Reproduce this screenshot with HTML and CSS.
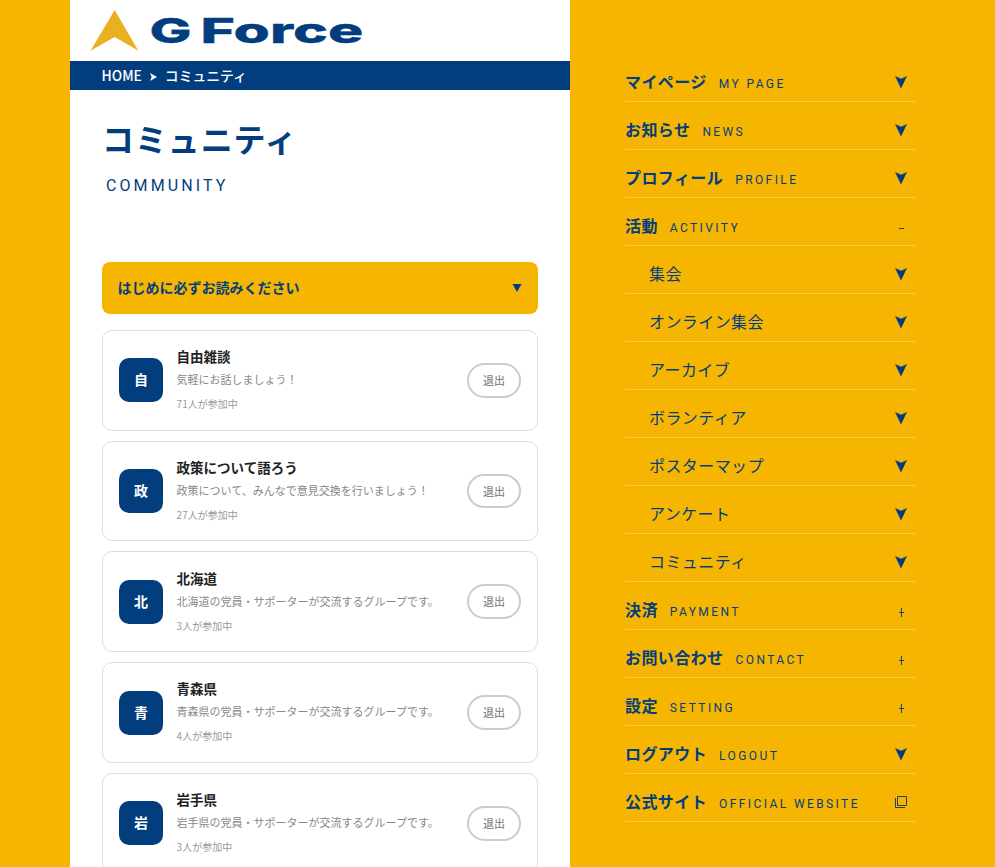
FILE: index.html
```html
<!DOCTYPE html>
<html lang="ja">
<head>
<meta charset="utf-8">
<title>コミュニティ | G Force</title>
<link rel="stylesheet" href="styles.css">
</head>
<body>
<svg class="defs" width="0" height="0">
  <symbol id="arrow" viewBox="0 0 12 13"><path d="M0 0 L6 2.7 L12 0 L6 12.5 Z"/></symbol>
  <symbol id="window" viewBox="0 0 12 12"><path d="M2.5 .5h9v9h-9zM.5 2v9.500h9.500" fill="none" stroke="currentColor"/></symbol>
</svg>
<div class="layout">
  <main class="page">
    <header class="header">
      <svg class="logo" width="300" height="61" viewBox="0 0 300 61" role="img" aria-label="G Force">
        <path d="M44.7 10 L68.3 50.700 L44.7 37 L20.500 50.700 Z" fill="#e9b020"/>
        <text class="logo-text" transform="translate(79.500 42.600) scale(1.5 1)" textLength="28" lengthAdjust="spacingAndGlyphs">G</text>
        <text class="logo-text" transform="translate(130.500 42.600) scale(1.5 1)" textLength="108.500" lengthAdjust="spacingAndGlyphs">Force</text>
      </svg>
    </header>
    <nav class="crumbs"><span>HOME</span><svg class="crumb-arrow" width="7" height="8" viewBox="0 0 7 8"><path d="M0 0L7 4L0 8L1.7 4Z"/></svg><span>コミュニティ</span></nav>
    <div class="content">
      <h1 class="title">コミュニティ</h1>
      <p class="subtitle">COMMUNITY</p>
      <div class="notice"><span>はじめに必ずお読みください</span><svg width="10" height="8" viewBox="0 0 10 8"><path d="M.5 0h9L5 8z"/></svg></div>
      <div class="cards">
        <article class="card"><div class="avatar">自</div><div class="info"><h2>自由雑談</h2><p class="desc">気軽にお話しましょう！</p><p class="count">71人が参加中</p></div><button class="leave">退出</button></article>
        <article class="card"><div class="avatar">政</div><div class="info"><h2>政策について語ろう</h2><p class="desc">政策について、みんなで意見交換を行いましょう！</p><p class="count">27人が参加中</p></div><button class="leave">退出</button></article>
        <article class="card"><div class="avatar">北</div><div class="info"><h2>北海道</h2><p class="desc">北海道の党員・サポーターが交流するグループです。</p><p class="count">3人が参加中</p></div><button class="leave">退出</button></article>
        <article class="card"><div class="avatar">青</div><div class="info"><h2>青森県</h2><p class="desc">青森県の党員・サポーターが交流するグループです。</p><p class="count">4人が参加中</p></div><button class="leave">退出</button></article>
        <article class="card"><div class="avatar">岩</div><div class="info"><h2>岩手県</h2><p class="desc">岩手県の党員・サポーターが交流するグループです。</p><p class="count">3人が参加中</p></div><button class="leave">退出</button></article>
      </div>
    </div>
  </main>
  <nav class="menu">
    <a class="item"><b>マイページ</b><small>MY PAGE</small><svg class="arrow"><use href="#arrow"/></svg></a>
    <a class="item"><b>お知らせ</b><small>NEWS</small><svg class="arrow"><use href="#arrow"/></svg></a>
    <a class="item"><b>プロフィール</b><small>PROFILE</small><svg class="arrow"><use href="#arrow"/></svg></a>
    <a class="item"><b>活動</b><small>ACTIVITY</small><i class="sign minus"></i></a>
    <a class="item sub"><span>集会</span><svg class="arrow"><use href="#arrow"/></svg></a>
    <a class="item sub"><span>オンライン集会</span><svg class="arrow"><use href="#arrow"/></svg></a>
    <a class="item sub"><span>アーカイブ</span><svg class="arrow"><use href="#arrow"/></svg></a>
    <a class="item sub"><span>ボランティア</span><svg class="arrow"><use href="#arrow"/></svg></a>
    <a class="item sub"><span>ポスターマップ</span><svg class="arrow"><use href="#arrow"/></svg></a>
    <a class="item sub"><span>アンケート</span><svg class="arrow"><use href="#arrow"/></svg></a>
    <a class="item sub"><span>コミュニティ</span><svg class="arrow"><use href="#arrow"/></svg></a>
    <a class="item"><b>決済</b><small>PAYMENT</small><i class="sign plus"></i></a>
    <a class="item"><b>お問い合わせ</b><small>CONTACT</small><i class="sign plus"></i></a>
    <a class="item"><b>設定</b><small>SETTING</small><i class="sign plus"></i></a>
    <a class="item"><b>ログアウト</b><small>LOGOUT</small><svg class="arrow"><use href="#arrow"/></svg></a>
    <a class="item"><b>公式サイト</b><small>OFFICIAL WEBSITE</small><svg class="window"><use href="#window"/></svg></a>
  </nav>
</div>
</body>
</html>
```
FILE: styles.css
```css
* { box-sizing: border-box; }
body {
  margin: 0;
  height: 867px;
  overflow: hidden;
  background: #f6b500;
  color: #023e7d;
  font-family: "Noto Sans CJK JP", sans-serif;
}
h1, h2, p { margin: 0; }
.defs { display: block; height: 0; }
.layout { display: flex; height: 867px; }
.page { width: 500px; margin-left: 70px; background: #fff; overflow: hidden; }
.header { height: 61px; }
.logo { display: block; }
.logo-text { font: 800 34.5px Inter, sans-serif; fill: #023e7d; stroke: #023e7d; stroke-width: .3px; }
.crumbs {
  display: flex;
  align-items: center;
  height: 29px;
  padding-left: 31.5px;
  background: #023e7d;
  color: #fff;
  font-size: 13.8px;
  font-weight: 500;
  line-height: 29px;
}
.crumb-arrow { margin: 2px 8px 0; fill: #fff; }
.content { padding: 0 32px; }
.title { margin-top: 24px; font-size: 32px; line-height: 48px; letter-spacing: .9px; }
.subtitle {
  margin: 14px 0 0 4px;
  font: 16px/20px Roboto, sans-serif;
  letter-spacing: 3.1px;
}
.notice {
  display: flex;
  align-items: center;
  justify-content: space-between;
  height: 52px;
  margin-top: 66px;
  padding: 0 16px;
  border-radius: 8px;
  background: #f6b500;
  font-size: 14px;
  font-weight: 700;
}
.notice span { margin: -3px 0 0 -.4px; }
.notice svg { fill: #023e7d; }
.cards { display: grid; gap: 10px; margin-top: 16.1px; }
.card {
  display: flex;
  align-items: center;
  height: 100.7px;
  padding: 0 16px;
  border: 1px solid #ddd;
  border-radius: 10px;
}
.avatar {
  width: 44px;
  height: 44px;
  margin-right: 13.6px;
  border-radius: 10px;
  background: #023e7d;
  color: #fff;
  font-size: 14px;
  font-weight: 700;
  line-height: 43px;
  text-align: center;
}
.info { flex: 1; margin-top: -1.4px; white-space: nowrap; }
.info h2 { color: #222; font-size: 13.5px; line-height: 22px; }
.desc { margin-top: 1px; color: #888; font-size: 11px; line-height: 22px; }
.count { margin-top: 4px; color: #999; font-size: 10px; line-height: 20px; }
.leave {
  width: 54px;
  height: 34.7px;
  padding: 0 0 1px;
  border: 2px solid #ccc;
  border-radius: 18px;
  background: #fff;
  color: #888;
  font: 500 11px "Noto Sans CJK JP", sans-serif;
}
.menu { width: 290px; margin: 54px 0 0 55px; }
.item {
  display: flex;
  align-items: center;
  height: 48px;
  padding: 7px 8px 0 0;
  border-bottom: 1px solid #fbcb4d;
  font-size: 16px;
  line-height: 24px;
  letter-spacing: .42px;
}
.item.sub { padding-left: 24px; }
.item small {
  margin: 5px 0 0 12px;
  font: 12px/16px Roboto, sans-serif;
  letter-spacing: 2.4px;
}
.item svg { margin-left: auto; fill: #023e7d; }
.item .arrow { width: 12px; height: 13px; margin-top: 2px; }
.item .window { width: 12px; height: 12px; margin-top: 1px; color: #203f60; }
.sign { width: 5px; height: 9px; margin: 6px 3px 0 auto; }
.minus { background: linear-gradient(#203f60, #203f60) center / 5px 1px no-repeat; }
.plus {
  background:
    linear-gradient(#203f60, #203f60) center / 5px 1px no-repeat,
    linear-gradient(#203f60, #203f60) center / 1px 9px no-repeat;
}
```
